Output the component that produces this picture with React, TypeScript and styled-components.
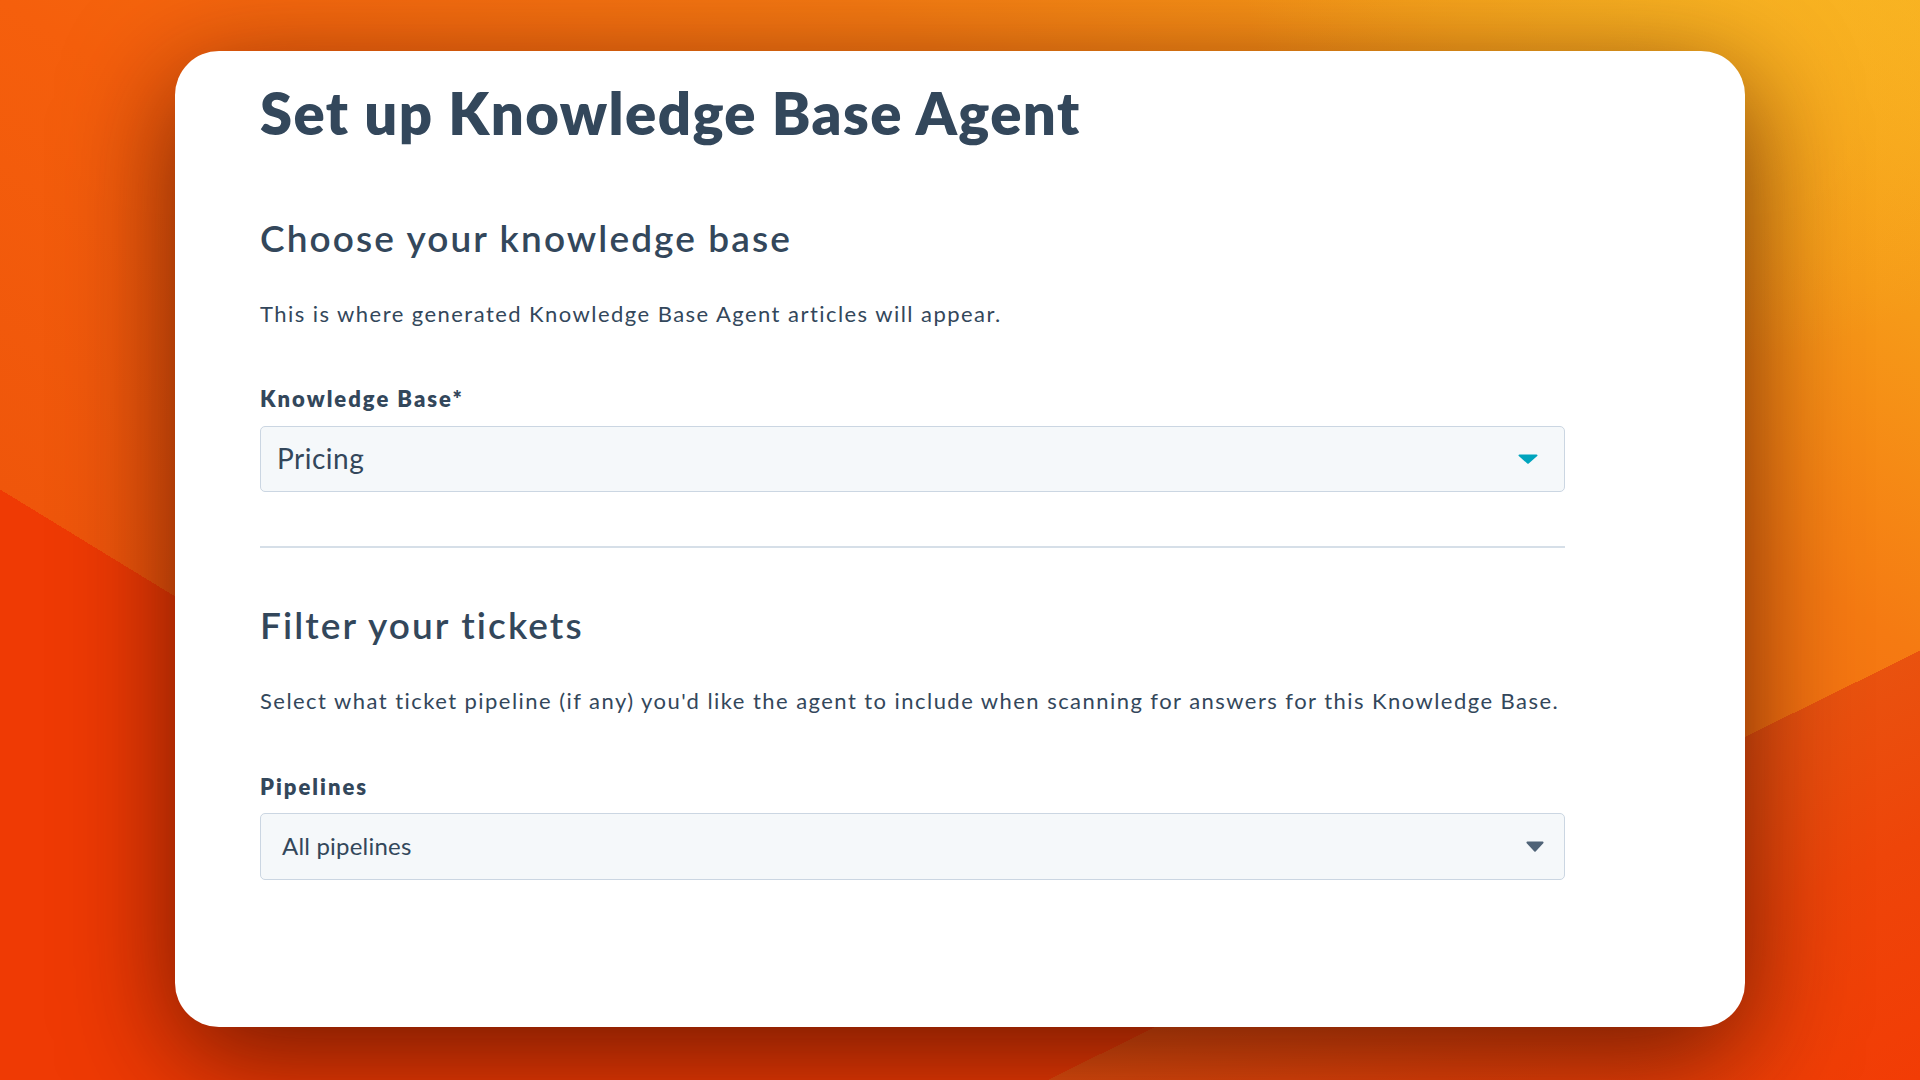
import styled, { createGlobalStyle } from 'styled-components';

const GlobalStyle = createGlobalStyle`
  html, body {
    margin: 0;
    padding: 0;
  }
  body {
    width: 1920px;
    height: 1080px;
    overflow: hidden;
    font-family: Lato, 'Noto Sans', sans-serif;
    color: #33475b;
  }
`;

// wallpaper: a red base, an orange/yellow upper fold cut by a diagonal on the left,
// a red strip under the card and a red-orange lower fold cut by a diagonal on the right
const Backdrop = styled.main`
  width: 1920px;
  height: 1080px;
  box-sizing: border-box;
  padding: 51px 175px 0 175px;
  background:
    linear-gradient(153.8deg, rgba(233, 82, 15, 0) 78.8%, #e9520f 78.8%, #ee4509 88%, #f23c05 100%),
    linear-gradient(180deg, rgba(239, 58, 4, 0) 93.5%, #ef3a04 93.5%, #ef3a04 100%),
    radial-gradient(ellipse 460px 420px at 1700px -60px, rgba(249, 184, 36, 0.75), rgba(249, 184, 36, 0) 100%),
    linear-gradient(211.45deg, #f8b020 0%, #f69a18 14%, #f57a12 29%, #f55f0c 52%, #ef560b 73.8%, rgba(239, 86, 11, 0) 73.8%),
    #ef3a04;
`;

const Card = styled.section`
  height: 976px;
  box-sizing: border-box;
  background: #ffffff;
  border-radius: 44px;
  padding: 27px 180px 0 85px;
  display: flex;
  flex-direction: column;
  box-shadow: 0 30px 110px rgba(70, 15, 0, 0.75);
`;

const Title = styled.h1`
  margin: 0;
  font-size: 58px;
  line-height: 1.2;
  font-weight: 800;
  letter-spacing: 1.4px;
`;

const SectionTitle = styled.h2<{ $gap: number }>`
  margin: ${(p) => p.$gap}px 0 0;
  font-size: 37px;
  line-height: 1.2;
  font-weight: 600;
  letter-spacing: 2.1px;
`;

const Help = styled.p`
  margin: 41px 0 0;
  font-size: 22px;
  line-height: 1.2;
  font-weight: 400;
  letter-spacing: 1.45px;
  white-space: nowrap;
`;

const FieldLabel = styled.label`
  display: block;
  margin: 59px 0 0;
  font-size: 22px;
  line-height: 1.2;
  font-weight: 800;
  letter-spacing: 2px;
`;

const Select = styled.div<{ $size: number; $track: number; $height: number; $padL: number; $padR: number }>`
  margin-top: 13px;
  height: ${(p) => p.$height}px;
  box-sizing: border-box;
  display: flex;
  align-items: center;
  justify-content: space-between;
  padding: 0 ${(p) => p.$padR}px 0 ${(p) => p.$padL}px;
  background: #f5f8fa;
  border: 1px solid #cbd6e2;
  border-radius: 5px;
  font-size: ${(p) => p.$size}px;
  letter-spacing: ${(p) => p.$track}px;
  line-height: 1.2;
`;

const Caret = styled.span<{ $color: string; $w: number; $h: number }>`
  width: ${(p) => p.$w}px;
  height: ${(p) => p.$h}px;
  display: flex;
  color: ${(p) => p.$color};
`;

const Divider = styled.hr`
  margin: 54px 0 0;
  border: none;
  height: 2px;
  background: #d6dfe8;
`;

const Arrow = ({ color, w, h }: { color: string; w: number; h: number }) => (
  <Caret $color={color} $w={w} $h={h}>
    <svg width={w} height={h} viewBox="0 0 20 11" preserveAspectRatio="none">
      <path d="M1.5 0.5h17a1 1 0 0 1 .7 1.7l-8.5 8.3a1 1 0 0 1-1.4 0L.8 2.2A1 1 0 0 1 1.5.5z" fill="currentColor" />
    </svg>
  </Caret>
);

export default function App() {
  return (
    <>
      <GlobalStyle />
      <Backdrop>
        <Card>
          <Title>Set up Knowledge Base Agent</Title>

          <SectionTitle $gap={68}>Choose your knowledge base</SectionTitle>
          <Help>This is where generated Knowledge Base Agent articles will appear.</Help>
          <FieldLabel>Knowledge Base*</FieldLabel>
          <Select $size={28} $track={0.5} $height={66} $padL={16} $padR={26}>
            <span>Pricing</span>
            <Arrow color="#00a4bd" w={20} h={10} />
          </Select>

          <Divider />

          <SectionTitle $gap={55}>Filter your tickets</SectionTitle>
          <Help>
            Select what ticket pipeline (if any) you'd like the agent to include when scanning for answers for this
            Knowledge Base.
          </Help>
          <FieldLabel>Pipelines</FieldLabel>
          <Select $size={24} $track={0.2} $height={67} $padL={21} $padR={20}>
            <span>All pipelines</span>
            <Arrow color="#4f6377" w={18} h={11} />
          </Select>
        </Card>
      </Backdrop>
    </>
  );
}
